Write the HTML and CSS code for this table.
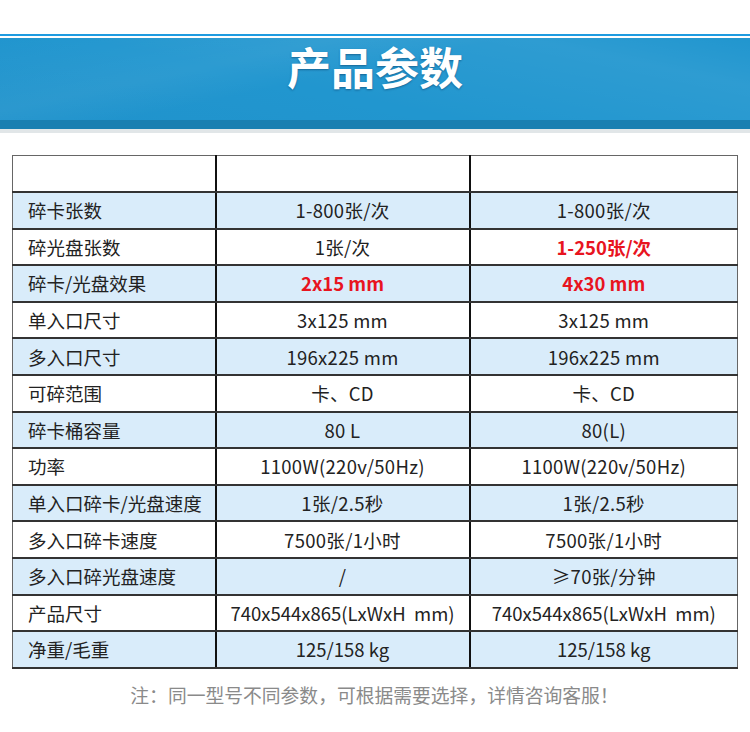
FILE: index.html
```html
<!DOCTYPE html>
<html lang="zh">
<head>
<meta charset="utf-8">
<title>产品参数</title>
<link rel="stylesheet" href="styles.css">
</head>
<body>
<header class="banner">
  <div class="banner-line"></div>
  <div class="banner-main"><h1 class="banner-title">产品参数</h1></div>
  <div class="banner-dark"></div>
  <div class="banner-shadow"></div>
</header>
<main class="content">
  <table class="spec">
    <colgroup><col class="c1"><col class="c2"><col class="c3"></colgroup>
    <tbody>
      <tr class="w"><td></td><td></td><td></td></tr>
      <tr class="b"><td>碎卡张数</td><td>1-800张/次</td><td>1-800张/次</td></tr>
      <tr class="w"><td>碎光盘张数</td><td>1张/次</td><td class="red">1-250张/次</td></tr>
      <tr class="b"><td>碎卡/光盘效果</td><td class="red">2x15 mm</td><td class="red">4x30 mm</td></tr>
      <tr class="w"><td>单入口尺寸</td><td>3x125 mm</td><td>3x125 mm</td></tr>
      <tr class="b"><td>多入口尺寸</td><td>196x225 mm</td><td>196x225 mm</td></tr>
      <tr class="w"><td>可碎范围</td><td>卡、CD</td><td>卡、CD</td></tr>
      <tr class="b"><td>碎卡桶容量</td><td>80 L</td><td>80(L)</td></tr>
      <tr class="w"><td>功率</td><td>1100W(220v/50Hz)</td><td>1100W(220v/50Hz)</td></tr>
      <tr class="b"><td>单入口碎卡/光盘速度</td><td>1张/2.5秒</td><td>1张/2.5秒</td></tr>
      <tr class="w"><td>多入口碎卡速度</td><td>7500张/1小时</td><td>7500张/1小时</td></tr>
      <tr class="b"><td>多入口碎光盘速度</td><td>/</td><td>≥70张/分钟</td></tr>
      <tr class="w"><td>产品尺寸</td><td class="narrow">740x544x865(LxWxH&nbsp; mm)</td><td class="narrow">740x544x865(LxWxH&nbsp; mm)</td></tr>
      <tr class="b"><td>净重/毛重</td><td class="narrow">125/158 kg</td><td class="narrow">125/158 kg</td></tr>
    </tbody>
  </table>
  <p class="note">注：同一型号不同参数，可根据需要选择，详情咨询客服！</p>
</main>
</body>
</html>
```
FILE: styles.css
```css
* { box-sizing: border-box; }
html, body { margin: 0; padding: 0; background: #fff; }
body {
  width: 750px;
  font-family: "Noto Sans CJK SC", "Noto Sans", sans-serif;
  color: #222;
}
.banner { padding-top: 34px; }
.banner-line { height: 2px; background: #1e9be0; margin-bottom: 2px; }
.banner-main {
  height: 82px;
  padding-top: 6px;
  background:
    linear-gradient(168deg, rgba(255,255,255,0) 0%, rgba(255,255,255,0.05) 30%, rgba(255,255,255,0) 45%),
    linear-gradient(12deg, rgba(0,60,120,0.04) 0%, rgba(255,255,255,0) 40%, rgba(255,255,255,0.06) 80%, rgba(255,255,255,0) 100%),
    #2196cf;
  display: flex;
  align-items: flex-start;
  justify-content: center;
}
.banner-title {
  margin: 0;
  color: #fff;
  font-size: 44px;
  font-weight: 700;
  line-height: 44px;
  text-shadow: 0 1px 2px rgba(0,40,80,0.45);
}
.banner-dark { height: 9px; background: #1a7fb1; }
.banner-shadow { height: 4px; background: #e1e6e8; }
.content { padding: 22px 13px 0 12px; }
.spec {
  width: 725px;
  border-collapse: collapse;
  table-layout: fixed;
  font-size: 18.5px;
}
.c1 { width: 203px; }
.c2 { width: 254px; }
.c3 { width: 268px; }
.spec tr { height: 36.6px; }
.spec td {
  border-top: 2px solid #333;
  border-bottom: 2px solid #333;
  border-left: 2px solid #111;
  border-right: 2px solid #111;
  padding: 0 2px;
  text-align: center;
  vertical-align: middle;
  line-height: 1.2;
  white-space: nowrap;
  letter-spacing: 0.3px;
}
.spec td:first-child {
  text-align: left;
  padding-left: 15px;
  letter-spacing: 0;
  border-left: 1.5px solid #666;
}
.spec td:last-child { border-right: 1.5px solid #666; }
.spec tr:first-child td { border-top: 1.5px solid #666; }
.spec tr.b td { background: #d9ecfa; }
.spec tr.w td { background: #fff; }
.spec td.red { color: #e8141f; font-weight: 700; letter-spacing: 0; }
.spec td.narrow { letter-spacing: 0; }
.note {
  margin: 12px 0 0;
  text-align: center;
  color: #8a8a8a;
  font-size: 18.8px;
}
```
